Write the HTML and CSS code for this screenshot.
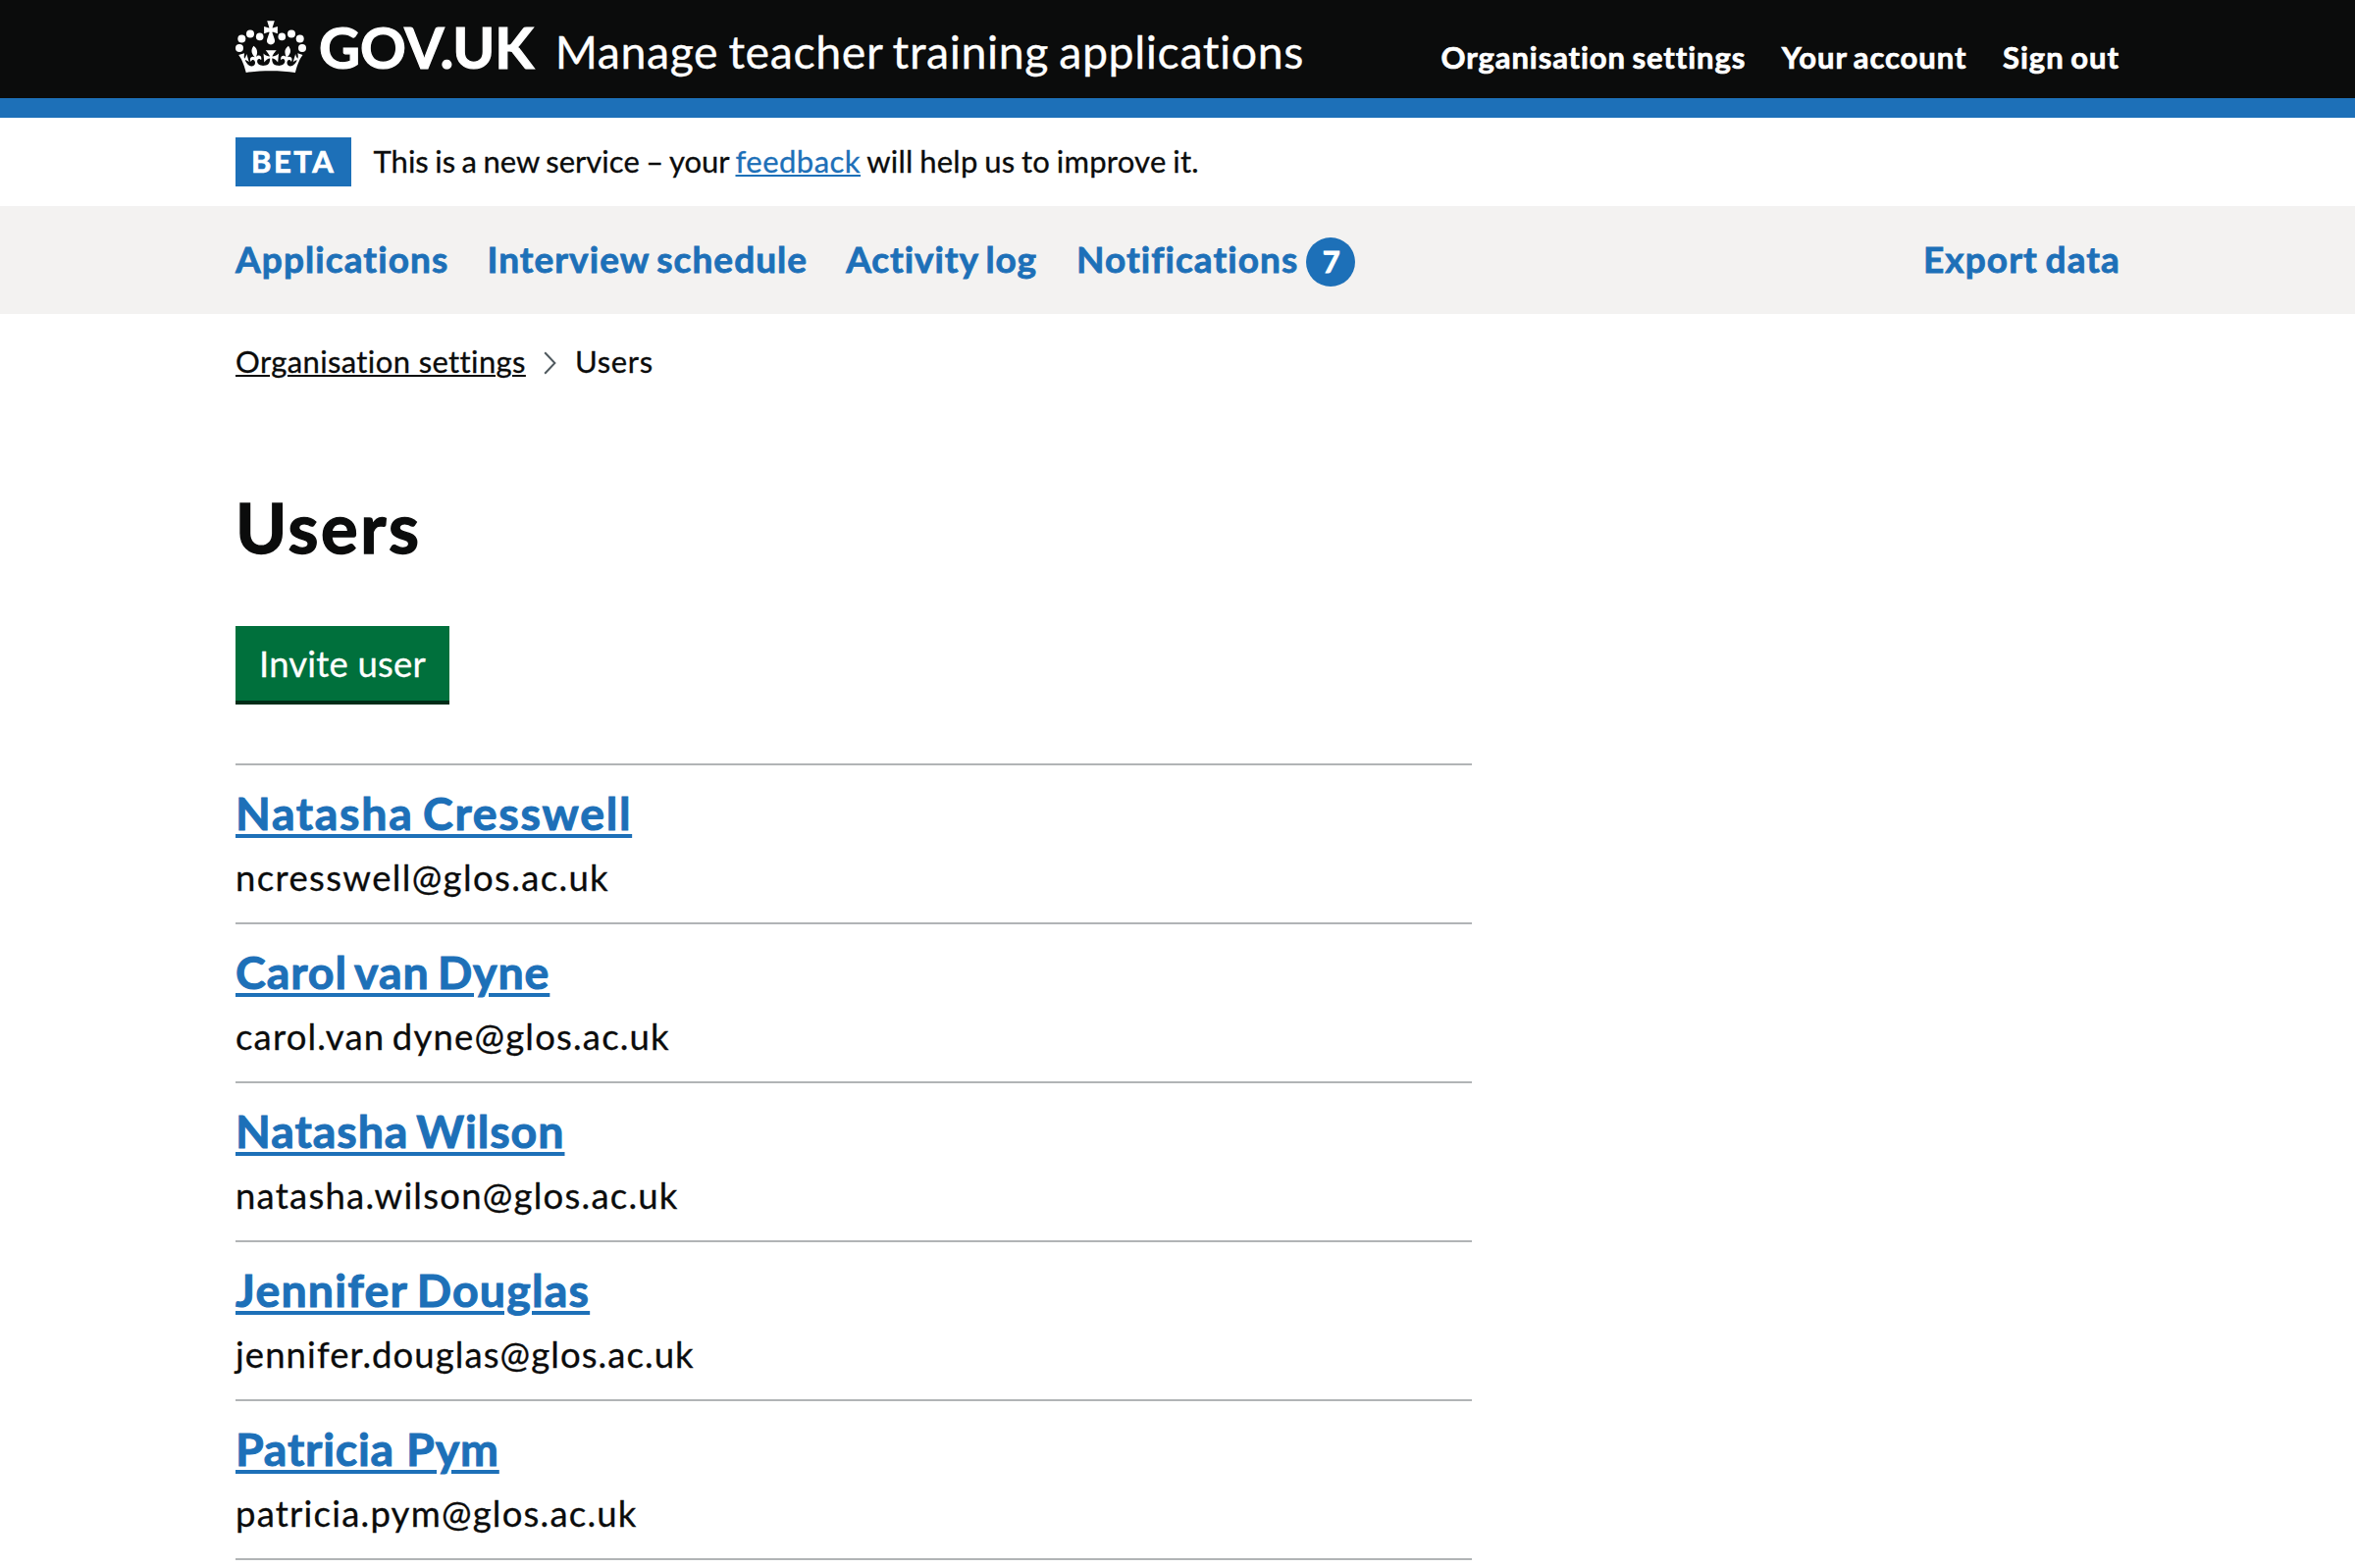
FILE: index.html
```html
<!DOCTYPE html>
<html lang="en">
<head>
<meta charset="utf-8">
<title>Users - Manage teacher training applications - GOV.UK</title>
<link rel="stylesheet" href="styles.css">
</head>
<body>
<header class="header">
  <div class="container header__inner">
    <svg class="header__crown" viewBox="240 21 72 53" aria-hidden="true">
      <g fill="currentColor">
        <circle cx="244" cy="49" r="4"/><circle cx="246.3" cy="39.4" r="4"/><circle cx="255" cy="34.4" r="4"/><circle cx="264.7" cy="37.4" r="3.8"/>
        <circle cx="308" cy="49" r="4"/><circle cx="305.7" cy="39.4" r="4"/><circle cx="297" cy="34.4" r="4"/><circle cx="287.3" cy="37.4" r="3.8"/>
        <path d="M272.2 21.2h7.6l-2.2 7 .3.3 5-1.6v7.4l-5-1.8-.5.4 2.4 7a4.1 4.1 0 1 1-7.6 0l2.4-7-.5-.4-5 1.8v-7.4l5 1.6.3-.3z"/>
        <path transform="translate(243.2 12.8) scale(2.04)" d="M16 29.2c4.4 0 8.6.3 12.3.8 1.1-4.5 2.4-7 3.7-8.8l-2.5-.9c.2 1.3.3 1.9 0 2.7-.4-.4-.8-1.1-1.1-2.3l-1.2 4c.7-.5 1.3-.8 2-.9-1.1 2.5-2.6 3.1-3.5 3-1.1-.2-1.7-1.2-1.5-2.1.3-1.2 1.5-1.5 2.1-.1 1.1-2.3-.8-3-2-2.3 1.9-1.9 2.1-3.5.6-5.6-2.1 1.6-2.1 3.2-1.2 5.5-1.2-1.4-3.2-.6-2.5 1.6.9-1.4 2.1-.5 1.9.8-.2 1.1-1.7 2.1-3.5 1.9-2.7-.2-2.9-2.1-2.9-3.6.7-.1 1.9.5 2.9 1.9l.4-4.3c-1.1 1.1-2.1 1.4-3.2 1.4.4-1.2 2.1-3 2.1-3h-5.4s1.7 1.9 2.1 3c-1.1 0-2.1-.2-3.2-1.4l.4 4.3c1-1.4 2.2-2 2.9-1.9-.1 1.5-.2 3.4-2.9 3.6-1.9.2-3.4-.8-3.5-1.9-.2-1.3 1-2.2 1.9-.8.7-2.3-1.2-3-2.5-1.6.9-2.2.9-3.9-1.2-5.5-1.5 2-1.3 3.7.6 5.6-1.2-.7-3.1 0-2 2.3.6-1.4 1.8-1.1 2.1.1.2.9-.3 1.9-1.5 2.1-.9.2-2.4-.5-3.5-3 .6 0 1.2.3 2 .9l-1.2-4c-.3 1.1-.7 1.9-1.1 2.3-.3-.8-.2-1.4 0-2.7l-2.9.9C1.3 23 2.6 25.5 3.7 30c3.7-.5 7.9-.8 12.3-.8"/>
      </g>
    </svg>
    <a class="header__logotype" href="#">GOV.UK</a>
    <a class="header__service" href="#">Manage teacher training applications</a>
    <nav class="header__nav">
      <a class="header__link" href="#">Organisation settings</a>
      <a class="header__link" href="#">Your account</a>
      <a class="header__link" href="#">Sign out</a>
    </nav>
  </div>
</header>
<div class="phase-banner container">
  <strong class="phase-banner__tag">BETA</strong>
  <p class="phase-banner__text">This is a new service – your <a class="phase-banner__link" href="#">feedback</a><span class="phase-banner__rest"> will help us to improve it.</span></p>
</div>
<nav class="primary-nav">
  <div class="container primary-nav__inner">
    <a class="primary-nav__link" href="#">Applications</a>
    <a class="primary-nav__link primary-nav__link--interviews" href="#">Interview schedule</a>
    <a class="primary-nav__link primary-nav__link--activity" href="#">Activity log</a>
    <a class="primary-nav__link primary-nav__link--notifications" href="#">Notifications</a>
    <span class="primary-nav__count">7</span>
    <a class="primary-nav__link primary-nav__link--export" href="#">Export data</a>
  </div>
</nav>
<div class="container">
  <nav class="breadcrumbs">
    <a class="breadcrumbs__link" href="#">Organisation settings</a>
    <svg class="breadcrumbs__chevron" viewBox="0 0 14 24" aria-hidden="true"><path d="M1.2 1.2 11.4 12 1.2 22.8" fill="none" stroke="#505a5f" stroke-width="2"/></svg>
    <span class="breadcrumbs__current">Users</span>
  </nav>
  <main class="main">
    <h1 class="heading">Users</h1>
    <a class="button" href="#">Invite user</a>
    <ul class="users">
      <li class="user"><a class="user__name user__name--cresswell" href="#">Natasha Cresswell</a><span class="user__email user__email--cresswell">ncresswell@glos.ac.uk</span></li>
      <li class="user"><a class="user__name user__name--dyne" href="#">Carol van Dyne</a><span class="user__email user__email--dyne">carol.van dyne@glos.ac.uk</span></li>
      <li class="user"><a class="user__name user__name--wilson" href="#">Natasha Wilson</a><span class="user__email user__email--wilson">natasha.wilson@glos.ac.uk</span></li>
      <li class="user"><a class="user__name user__name--douglas" href="#">Jennifer Douglas</a><span class="user__email user__email--douglas">jennifer.douglas@glos.ac.uk</span></li>
      <li class="user"><a class="user__name user__name--pym" href="#">Patricia Pym</a><span class="user__email user__email--pym">patricia.pym@glos.ac.uk</span></li>
    </ul>
  </main>
</div>
</body>
</html>
```
FILE: styles.css
```css
* { box-sizing: border-box; }

body {
  margin: 0;
  background: #fff;
  color: #0b0c0c;
  font-family: Lato, "Noto Sans", sans-serif;
  font-size: 36.5px;
  font-variant-ligatures: none;
  -webkit-text-stroke: 0.3px currentColor;
}

a { color: inherit; text-decoration: none; }

.container { width: 1920px; margin: 0 auto; }

.header { height: 120px; background: #0b0c0c; border-bottom: 20px solid #1d70b8; color: #fff; }
.header__inner { display: flex; align-items: baseline; }
.header__crown { align-self: flex-start; width: 72px; height: 53px; margin-top: 21px; }
.header__logotype { margin: 19px 0 0 12.9px; font-size: 58px; font-weight: 700; line-height: 58px; letter-spacing: -0.07px; -webkit-text-stroke-width: 1.2px; }
.header__service { margin-left: 21.8px; font-size: 46.5px; line-height: 58px; letter-spacing: 0.59px; word-spacing: -2.3px; }
.header__nav { display: flex; gap: 36.6px; margin-left: auto; font-size: 31px; font-weight: 700; line-height: 40px; -webkit-text-stroke-width: 0.7px; }
.header__link { letter-spacing: 0.92px; word-spacing: -2px; }
.header__link:last-child { letter-spacing: 1px; }

.phase-banner { display: flex; height: 90px; padding-top: 20px; font-size: 31px; line-height: 48px; }
.phase-banner__tag { width: 118px; height: 50px; padding-left: 16px; background: #1d70b8; color: #fff; letter-spacing: 2.5px; -webkit-text-stroke-width: 0.7px; }
.phase-banner__text { margin: 0 0 0 22.5px; letter-spacing: 0.02px; word-spacing: -1.5px; }
.phase-banner__link { color: #1d70b8; text-decoration: underline 2px; text-underline-offset: 2px; letter-spacing: 0.48px; }
.phase-banner__rest { letter-spacing: 0.24px; }

.primary-nav { height: 110px; background: #f3f2f1; color: #1d70b8; font-size: 37px; font-weight: 700; line-height: 107px; -webkit-text-stroke-width: 0.8px; }
.primary-nav__inner { display: flex; }
.primary-nav__link { margin-right: 39px; letter-spacing: 1.1px; word-spacing: -2.5px; }
.primary-nav__link--interviews { letter-spacing: 1.05px; }
.primary-nav__link--activity { margin-right: 40px; letter-spacing: 0.92px; }
.primary-nav__link--notifications { margin-right: 8px; letter-spacing: 1.05px; }
.primary-nav__link--export { margin: 0 -1px 0 auto; }
.primary-nav__count { width: 50px; height: 50px; margin-top: 32px; padding-left: 1px; border-radius: 50%; background: #1d70b8; color: #fff; font-size: 31px; line-height: 48px; text-align: center; }

.breadcrumbs { display: flex; padding-top: 28px; font-size: 31px; line-height: 40px; }
.breadcrumbs__link { text-decoration: underline 2px; text-underline-offset: 2px; letter-spacing: 0.38px; }
.breadcrumbs__chevron { width: 14px; height: 24px; margin: 10px 18px 0 18px; }
.breadcrumbs__current { letter-spacing: 0.7px; }

.main { padding-top: 108px; }
.heading { margin: 0; font-size: 70.5px; font-weight: 700; line-height: 81px; letter-spacing: 2.6px; -webkit-text-stroke-width: 1.4px; }
.button { display: block; width: 218px; height: 80px; margin-top: 61px; padding-left: 24px; background: #00703c; border-bottom: 4px solid #002d18; color: #fff; line-height: 76px; letter-spacing: 0.19px; }

.users { width: 1260px; margin: 60px 0 0; padding: 0; list-style: none; border-bottom: 2px solid #b1b4b6; }
.user { display: flex; flex-direction: column; align-items: flex-start; height: 162px; padding-top: 18px; border-top: 2px solid #b1b4b6; }
.user__name { color: #1d70b8; font-size: 46.5px; font-weight: 700; line-height: 60px; text-decoration: underline 4px; text-underline-offset: 4px; -webkit-text-stroke-width: 1px; }
.user__email { margin-top: 12px; line-height: 48px; }
.user__name--cresswell { letter-spacing: 1.68px; word-spacing: -3.3px; }
.user__name--dyne { letter-spacing: 0.93px; word-spacing: -4px; }
.user__name--wilson { letter-spacing: 0.96px; word-spacing: -4px; }
.user__name--douglas { letter-spacing: 1.2px; word-spacing: -3px; }
.user__name--pym { letter-spacing: 0.8px; }
.user__email--cresswell { letter-spacing: 1.36px; }
.user__email--dyne { letter-spacing: 1.18px; word-spacing: -3px; }
.user__email--wilson { letter-spacing: 1.23px; }
.user__email--douglas { letter-spacing: 1.07px; }
.user__email--pym { letter-spacing: 1.22px; }
```
